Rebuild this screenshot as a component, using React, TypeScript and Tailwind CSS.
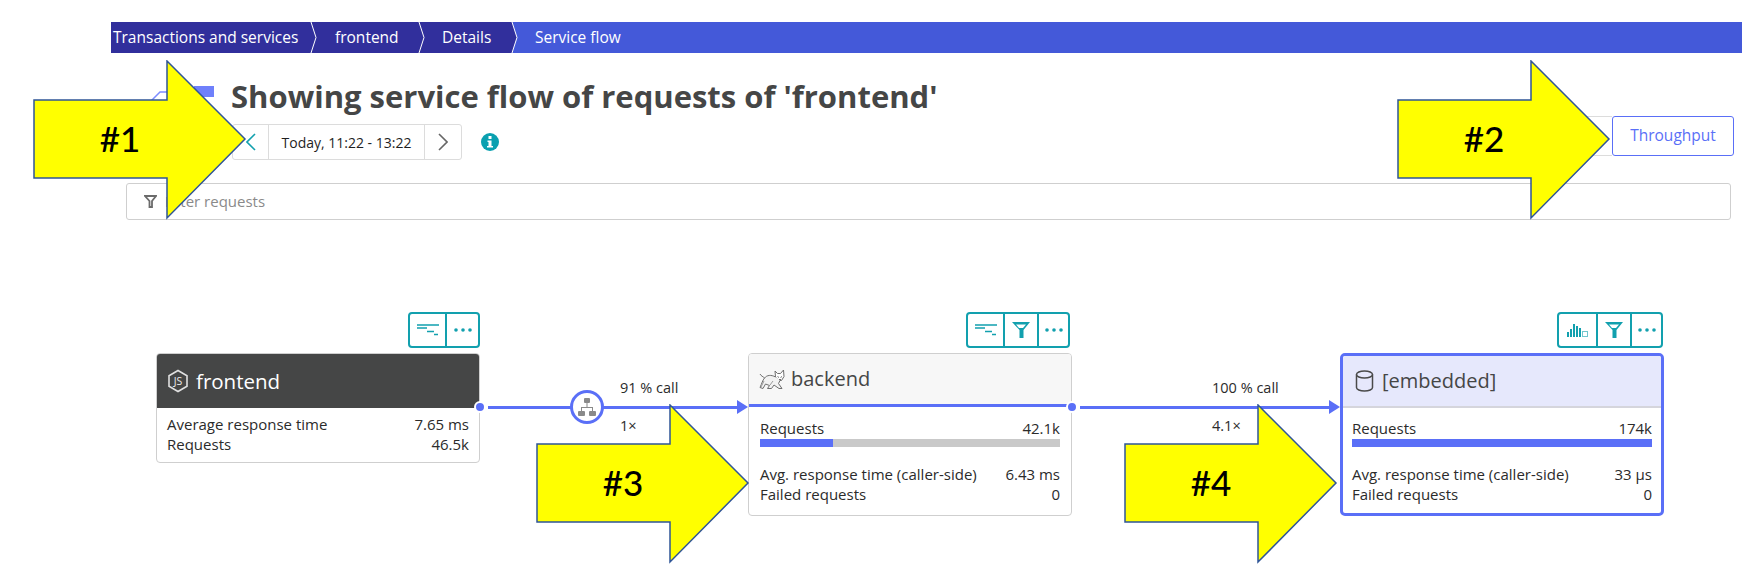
import React from 'react';

const uiFont = { fontFamily: '"Open Sans", Lato, sans-serif' };
const arrowFont = { fontFamily: 'Lato, sans-serif' };

const Chevron = ({ left, right }: { left: string; right: string }) => (
  <svg width="8" height="31" viewBox="0 0 8 31" className="shrink-0">
    <rect width="8" height="31" fill={right} />
    <polygon points="0,0 1,0 6,15.5 1,31 0,31" fill={left} />
    <polyline points="1,0 6,15.5 1,31" fill="none" stroke="#ffffff" strokeWidth="1" />
  </svg>
);

const WaterfallIcon = () => (
  <svg width="22" height="12" viewBox="0 0 22 12" stroke="#12a0ae" strokeWidth="1.6">
    <path d="M0 1h22M0 4h10M10 7.500h7M17 10.500h4" />
  </svg>
);

const FunnelIcon = () => (
  <svg width="18" height="16" viewBox="0 0 18 16" fill="#12a0ae">
    <path d="M0 0h18l-6.500 8v8h-4V8zM4 2.500l3 3.500h4l3-3.500z" fillRule="evenodd" />
  </svg>
);

const BarsIcon = () => (
  <svg width="21" height="13" viewBox="0 0 21 13" fill="#12a0ae">
    <rect x="0" y="8" width="2" height="5" />
    <rect x="3" y="5" width="2" height="8" />
    <rect x="6" y="0" width="2" height="13" />
    <rect x="9" y="2" width="2" height="11" />
    <rect x="12" y="4" width="2" height="9" />
    <rect x="15.500" y="7.500" width="5" height="5" fill="none" stroke="#12a0ae" strokeWidth="1" opacity="0.6" />
  </svg>
);

const DotsIcon = () => (
  <svg width="18" height="4" viewBox="0 0 18 4" fill="#12a0ae">
    <circle cx="2" cy="2" r="1.800" />
    <circle cx="9" cy="2" r="1.800" />
    <circle cx="16" cy="2" r="1.800" />
  </svg>
);

const NodeIcon = () => (
  <svg width="22" height="24" viewBox="0 0 22 24" fill="none">
    <path d="M11 1.500l9 5.200v10.600l-9 5.200-9-5.200V6.700z" stroke="#e0e0e0" strokeWidth="1.600" />
    <text x="11" y="16" textAnchor="middle" fontSize="10.500" fill="#ececec" style={uiFont}>JS</text>
  </svg>
);

const TomcatIcon = () => (
  <svg width="26" height="21" viewBox="0 0 26 21" fill="none" stroke="#6f6f6f" strokeWidth="1" strokeLinejoin="round">
    <path d="M16 2l2.500 2.500h3L24.500 1l.5 6.500-2.500 4h-3L16.500 8z" fill="#ffffff" />
    <path d="M16.500 8C12 5.500 8 6 5.500 9 3.500 11.500 3 14 1 18.500l3 1 2.500-4.500 4 1.500-2 3h4l2.500-3.500 5 3.500h3l-3.500-5 1.500-3" fill="#f2f2f2" />
    <path d="M5.500 9C4 7.500 2 7 1 5M18.500 7.500l1.500 1M23 7.500l-1.500 1M20 11l1-1 1 1" />
    <path d="M2 18l3-6M11 16l3-4" stroke="#9a9a9a" />
  </svg>
);

const DatabaseIcon = () => (
  <svg width="19" height="22" viewBox="0 0 19 22" fill="none" stroke="#4a4a4a" strokeWidth="1.500">
    <path d="M1.500 4.500C1.500 2.500 5 1 9.500 1s8 1.500 8 3.500v13c0 2-3.500 3.500-8 3.500s-8-1.500-8-3.500z" />
    <path d="M1.500 4.500c0 2 3.500 3.500 8 3.500s8-1.500 8-3.500" />
  </svg>
);

const HubIcon = () => (
  <svg width="20" height="20" viewBox="0 0 20 20" fill="#8a8a8a">
    <rect x="7" y="1" width="6" height="5" rx="1" />
    <rect x="1" y="14" width="7" height="5" rx="1" />
    <rect x="12" y="14" width="7" height="5" rx="1" />
    <path d="M9.500 6h1v4H16v4h-1v-3H5v3H4v-4h5.500z" />
  </svg>
);

const Toolbar = ({ cells, className }: { cells: { w: string; icon: React.ReactNode }[]; className: string }) => (
  <div className={`flex h-[36px] rounded-[4px] border-2 border-[#12a0ae] bg-white ${className}`}>
    {cells.map((c, i) => (
      <div key={i} className={`flex items-center justify-center ${c.w} ${i > 0 ? 'border-l-2 border-[#12a0ae]' : ''}`}>
        {c.icon}
      </div>
    ))}
  </div>
);

const Row = ({ label, value }: { label: string; value: string }) => (
  <div className="flex h-5 items-center justify-between whitespace-nowrap text-[15px] text-[#2b2b2b]">
    <span>{label}</span>
    <span>{value}</span>
  </div>
);

const Connector = ({ top, bottom, hub }: { top: string; bottom: string; hub?: boolean }) => (
  <div className="relative z-10 mt-[66px] w-[268px] shrink-0">
    <div className="ml-[140px] flex h-5 items-center text-[14.500px] text-[#2b2b2b]">{top}</div>
    <div className="relative flex h-[18px] items-center pl-[8px]">
      <div className="absolute -left-[6px] top-[3px] h-[12px] w-[12px] rounded-full border-2 border-white bg-[#5a6ff7]" />
      <div className="h-[3px] flex-1 bg-[#5a6ff7]" />
      <svg width="11" height="14" viewBox="0 0 11 14" className="shrink-0">
        <polygon points="0,0 11,7 0,14" fill="#5a6ff7" />
      </svg>
      {hub && (
        <div className="absolute left-[90px] top-[-8px] flex h-[34px] w-[34px] items-center justify-center rounded-full border-[3px] border-[#5a6ff7] bg-white">
          <HubIcon />
        </div>
      )}
    </div>
    <div className="ml-[140px] flex h-5 items-center text-[14.500px] text-[#2b2b2b]">{bottom}</div>
  </div>
);

const Arrow = ({ label, className }: { label: string; className: string }) => (
  <div className={`absolute z-20 h-[160px] w-[214px] ${className}`}>
    <svg width="214" height="160" viewBox="0 0 214 160">
      <polygon points="1,40 134,40 134,1 212,79 134,158 134,118 1,118" fill="#ffff00" stroke="#2f5597" strokeWidth="1.500" />
    </svg>
    <div className="absolute left-[37px] top-[55px] w-[100px] text-center text-[35px] font-medium leading-[46px] text-black" style={arrowFont}>{label}</div>
  </div>
);

export default function App() {
  return (
    <div className="relative h-[575px] w-[1749px] overflow-hidden bg-white pt-[22px]" style={uiFont}>
      {/* breadcrumb */}
      <div className="ml-[111px] flex h-[31px] w-[1631px] items-center bg-[#4459d9] text-[15.500px] text-white">
        <div className="flex h-full w-[199px] shrink-0 items-center whitespace-nowrap bg-[#312f9c] pl-[2px]">Transactions and services</div>
        <Chevron left="#312f9c" right="#312f9c" />
        <div className="flex h-full w-[100px] shrink-0 items-center bg-[#312f9c] pl-[17px]">frontend</div>
        <Chevron left="#312f9c" right="#312f9c" />
        <div className="flex h-full w-[85px] shrink-0 items-center bg-[#312f9c] pl-[16px]">Details</div>
        <Chevron left="#312f9c" right="#4459d9" />
        <div className="pl-[16px]">Service flow</div>
      </div>

      {/* title + timeframe */}
      <div className="mt-[23px] pl-[148px] pr-[15px]">
        <div className="flex h-[40px] items-center">
          <svg width="66" height="20" viewBox="0 0 66 20" className="mr-[17px] shrink-0">
            <path d="M0 18l12-12h20" fill="none" stroke="#7c8cff" strokeWidth="1.500" />
            <rect x="46" y="0" width="20" height="11" fill="#6f80fb" />
          </svg>
          <h1 className="whitespace-nowrap text-[31px] font-bold leading-[40px] text-[#454646]">Showing service flow of requests of 'frontend'</h1>
        </div>
        <div className="flex h-[44px] items-start justify-between">
          <div className="ml-[84px] mt-[8px] flex items-center">
            <div className="flex h-[36px] w-[230px] rounded-[3px] border border-[#dcdcdc]">
              <div className="flex w-[36px] items-center justify-center border-r border-[#dcdcdc]">
                <svg width="10" height="18" viewBox="0 0 10 18" fill="none" stroke="#12a0ae" strokeWidth="1.600">
                  <path d="M9 1L1 9l8 8" />
                </svg>
              </div>
              <div className="flex flex-1 items-center justify-center whitespace-nowrap text-[14px] text-[#1f1f1f]">Today, 11:22 - 13:22</div>
              <div className="flex w-[37px] items-center justify-center border-l border-[#dcdcdc]">
                <svg width="10" height="18" viewBox="0 0 10 18" fill="none" stroke="#666666" strokeWidth="1.600">
                  <path d="M1 1l8 8-8 8" />
                </svg>
              </div>
            </div>
            <svg width="18" height="18" viewBox="0 0 18 18" className="ml-[19px]">
              <circle cx="9" cy="9" r="9" fill="#0aa0b0" />
              <rect x="7.500" y="3" width="3" height="3" fill="#ffffff" />
              <path d="M6.500 7.500h4V13h1.500v1.500H6V13h1.500V9H6.500z" fill="#ffffff" />
            </svg>
          </div>
          <div className="flex h-[40px]">
            <div className="h-full w-[110px] rounded-l-[3px] border-y border-l border-[#dcdcdc]" />
            <div className="flex h-full w-[122px] items-center justify-center rounded-[3px] border border-[#5a6ff7] text-[15.500px] text-[#5a6ff7]">Throughput</div>
          </div>
        </div>
      </div>

      {/* filter */}
      <div className="ml-[126px] mt-[23px] flex h-[37px] w-[1605px] items-center rounded-[3px] border border-[#cfcfcf] pl-[17px] text-[15px] text-[#8a8a8a]">
        <svg width="13" height="13" viewBox="0 0 13 13" className="mr-[8px]" fill="none" stroke="#6b6b6b" strokeWidth="1.800">
          <path d="M1 1h11L8 6v6H5.500V6z" />
        </svg>
        Filter requests
      </div>

      {/* service flow */}
      <div className="mt-[92px] flex items-start pl-[156px]">
        <div className="w-[324px] shrink-0">
          <div className="flex justify-end">
            <Toolbar
              className="w-[72px]"
              cells={[
                { w: 'w-[35px]', icon: <WaterfallIcon /> },
                { w: 'flex-1', icon: <DotsIcon /> },
              ]}
            />
          </div>
          <div className="mt-[5px] h-[110px] overflow-hidden rounded-[4px] border border-[#cfcfcf]">
            <div className="flex h-[54px] items-center gap-[7px] bg-[#454646] pl-[10px] text-[20.500px] text-white">
              <NodeIcon />
              frontend
            </div>
            <div className="px-[10px] pt-[6px]">
              <Row label="Average response time" value="7.65 ms" />
              <Row label="Requests" value="46.5k" />
            </div>
          </div>
        </div>

        <Connector top="91 % call" bottom="1×" hub />

        <div className="w-[324px] shrink-0">
          <div className="flex justify-end pr-[2px]">
            <Toolbar
              className="w-[104px]"
              cells={[
                { w: 'w-[35px]', icon: <WaterfallIcon /> },
                { w: 'w-[34px]', icon: <FunnelIcon /> },
                { w: 'flex-1', icon: <DotsIcon /> },
              ]}
            />
          </div>
          <div className="mt-[5px] h-[163px] overflow-hidden rounded-[4px] border border-[#cfcfcf]">
            <div className="flex h-[53px] items-center gap-[6px] border-b-[3px] border-[#5a6ff7] bg-[#f7f7f7] pl-[10px] text-[20px] text-[#454646]">
              <TomcatIcon />
              backend
            </div>
            <div className="px-[11px] pt-[11px]">
              <Row label="Requests" value="42.1k" />
              <div className="mt-px h-[8px] bg-[#c9c9c9]">
                <div className="h-full w-[73px] bg-[#5a6ff7]" />
              </div>
              <div className="mt-[17px]">
                <Row label="Avg. response time (caller-side)" value="6.43 ms" />
                <Row label="Failed requests" value="0" />
              </div>
            </div>
          </div>
        </div>

        <Connector top="100 % call" bottom="4.1×" />

        <div className="w-[324px] shrink-0">
          <div className="flex justify-end pr-px">
            <Toolbar
              className="w-[106px]"
              cells={[
                { w: 'w-[37px]', icon: <BarsIcon /> },
                { w: 'w-[34px]', icon: <FunnelIcon /> },
                { w: 'flex-1', icon: <DotsIcon /> },
              ]}
            />
          </div>
          <div className="mt-[5px] h-[163px] overflow-hidden rounded-[5px] border-[3px] border-[#5a6ff7]">
            <div className="flex h-[52px] items-center gap-[8px] border-b-2 border-[#d5d5dc] bg-[#e6e8fc] pl-[12px] text-[20px] text-[#454646]">
              <DatabaseIcon />
              [embedded]
            </div>
            <div className="px-[9px] pt-[10px]">
              <Row label="Requests" value="174k" />
              <div className="mt-px h-[8px] bg-[#5a6ff7]" />
              <div className="mt-[17px]">
                <Row label="Avg. response time (caller-side)" value="33 µs" />
                <Row label="Failed requests" value="0" />
              </div>
            </div>
          </div>
        </div>
      </div>

      <Arrow label="#1" className="left-[33px] top-[60px]" />
      <Arrow label="#2" className="left-[1397px] top-[60px]" />
      <Arrow label="#3" className="left-[536px] top-[404px]" />
      <Arrow label="#4" className="left-[1124px] top-[404px]" />
    </div>
  );
}
